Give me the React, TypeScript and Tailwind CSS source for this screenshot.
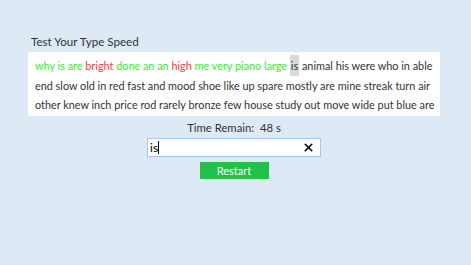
import { X } from "lucide-react";

const line1: { w: string; c: "g" | "r" | "cur" | "n" }[] = [
	{ w: "why", c: "g" },
	{ w: "is", c: "g" },
	{ w: "are", c: "g" },
	{ w: "bright", c: "r" },
	{ w: "done", c: "g" },
	{ w: "an", c: "g" },
	{ w: "an", c: "g" },
	{ w: "high", c: "r" },
	{ w: "me", c: "g" },
	{ w: "very", c: "g" },
	{ w: "piano", c: "g" },
	{ w: "large", c: "g" },
	{ w: "is", c: "cur" },
	{ w: "animal", c: "n" },
	{ w: "his", c: "n" },
	{ w: "were", c: "n" },
	{ w: "who", c: "n" },
	{ w: "in", c: "n" },
	{ w: "able", c: "n" },
];

const colorOf = {
	g: "text-[#33f033]",
	r: "text-[#ff3b3b]",
	cur: "bg-[#d9d9d9] text-[#333333]",
	n: "text-[#333333]",
};

export default function App() {
	return (
		<div
			className="w-[471px] h-[265px] bg-[#dde9f5] pt-[33px] px-[28px]"
			style={{ fontFamily: 'Lato, "Open Sans", sans-serif' }}
		>
			<div className="pl-[3px] text-[11.6px] text-[#333333] leading-[18px]">Test Your Type Speed</div>
			<div className="mt-[1px] w-[412px] h-[64px] bg-white px-[7px] pt-[4px] text-[10.85px] leading-[19.5px] text-[#333333]">
				<div className="whitespace-nowrap">
					{line1.map((t, i) => (
						<span key={i}>
							<span className={colorOf[t.c] + (t.c === "cur" ? " py-[4px] px-[1px]" : "")}>{t.w}</span>
							{i < line1.length - 1 ? " " : ""}
						</span>
					))}
				</div>
				<div className="whitespace-nowrap">
					end slow old in red fast and mood shoe like up spare mostly are mine streak turn air
				</div>
				<div className="whitespace-nowrap">
					other knew inch price rod rarely bronze few house study out move wide put blue are
				</div>
			</div>
			<div className="flex flex-col items-center w-[412px]">
				<div className="mt-[4px] text-[11.3px] leading-[16px] text-[#333333]">
					Time Remain:&nbsp; 48 s
				</div>
				<div className="mt-[2px] w-[174px] h-[19px] bg-white border border-[#a6c6ea] flex items-center pl-[2px] pr-[5px]">
					<span className="text-[12px] text-black leading-none">is</span>
					<span className="w-px h-[13px] bg-black" />
					<span className="flex-1" />
					<X size={13} strokeWidth={3} className="text-black" />
				</div>
				<button className="mt-[5px] w-[69px] h-[17px] bg-[#22c24a] text-white text-[11px] leading-none">
					Restart
				</button>
			</div>
		</div>
	);
}
